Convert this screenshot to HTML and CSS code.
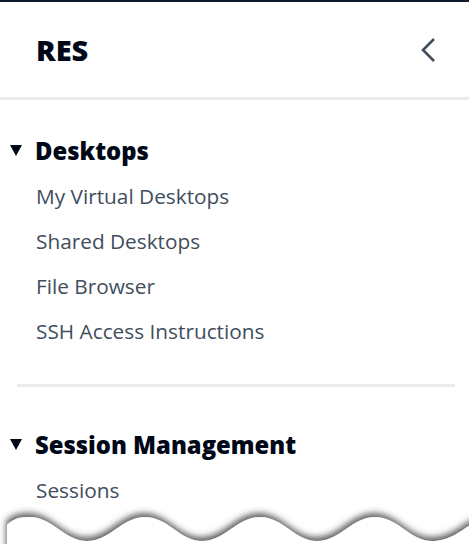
FILE: index.html
```html
<!DOCTYPE html>
<html>
<head>
<meta charset="utf-8">
<link rel="stylesheet" href="styles.css">
</head>
<body>
<div class="page">
  <header class="nav-header">
    <span class="nav-title">RES</span>
    <button class="collapse" aria-label="Close navigation">
      <svg width="16" height="26" viewBox="0 0 16 26"><polyline points="13,2 2,13 13,24" fill="none" stroke="#414d5c" stroke-width="2.6" stroke-linejoin="miter"/></svg>
    </button>
  </header>
  <div class="header-sep"></div>
  <section class="group first">
    <div class="group-head"><span class="tri"></span><span>Desktops</span></div>
    <a class="link">My Virtual Desktops</a>
    <a class="link">Shared Desktops</a>
    <a class="link">File Browser</a>
    <a class="link">SSH Access Instructions</a>
  </section>
  <div class="divider"></div>
  <section class="group">
    <div class="group-head"><span class="tri"></span><span>Session Management</span></div>
    <a class="link">Sessions</a>
  </section>
  <svg class="torn" width="469" height="40" viewBox="0 0 469 40">
    <defs>
      <filter id="sh" x="-10%" y="-60%" width="120%" height="200%">
        <feDropShadow dx="-1" dy="-4" stdDeviation="3" flood-color="#4a4a4a" flood-opacity="0.85"/>
      </filter>
    </defs>
    <path filter="url(#sh)" fill="#ffffff" d="M7 21 C 15 13, 22 13, 30 13 C 52 13, 65 37, 87 37 C 110 37, 122 13, 145 13 C 168 13, 180 37, 202 37 C 225 37, 237 13, 260 13 C 283 13, 295 37, 317 37 C 340 37, 352 13, 375 13 C 398 13, 410 37, 432 37 C 450 37, 460 27, 475 18 L 475 60 L 7 60 Z"/>
  </svg>
</div>
</body>
</html>
```
FILE: styles.css
```css
html, body {
  margin: 0;
  padding: 0;
  background: #ffffff;
}
body {
  font-family: "Open Sans", "Noto Sans", "Liberation Sans", sans-serif;
  width: 469px;
  height: 544px;
  overflow: hidden;
}
.page {
  position: relative;
  width: 469px;
  height: 544px;
  border-top: 2px solid #0f1b2a;
  box-sizing: border-box;
  overflow: hidden;
}
.nav-header {
  height: 95px;
  display: flex;
  align-items: center;
  justify-content: space-between;
  padding: 0 32px 0 36px;
}
.nav-title {
  font-size: 29px;
  font-weight: 800;
  color: #000716;
  line-height: 32px;
}
.collapse {
  border: 0;
  background: none;
  padding: 0;
  display: flex;
  align-items: center;
}
.header-sep {
  height: 3px;
  background: #e9ebed;
}
.group {
  display: flex;
  flex-direction: column;
}
.group.first {
  padding-top: 28px;
}
.group-head {
  height: 45px;
  display: flex;
  align-items: center;
  gap: 13px;
  padding-left: 10px;
  font-size: 23.8px;
  font-weight: 800;
  color: #000716;
}
.tri {
  width: 0;
  height: 0;
  border-left: 6px solid transparent;
  border-right: 6px solid transparent;
  border-top: 11px solid #000716;
}
.link {
  height: 45px;
  line-height: 47px;
  padding-left: 36px;
  font-size: 20.8px;
  color: #414d5c;
}
.divider {
  height: 3px;
  background: #e9ebed;
  margin: 31px 14px 35px 17px;
}
.torn {
  position: absolute;
  left: 0;
  bottom: 0;
}
```
